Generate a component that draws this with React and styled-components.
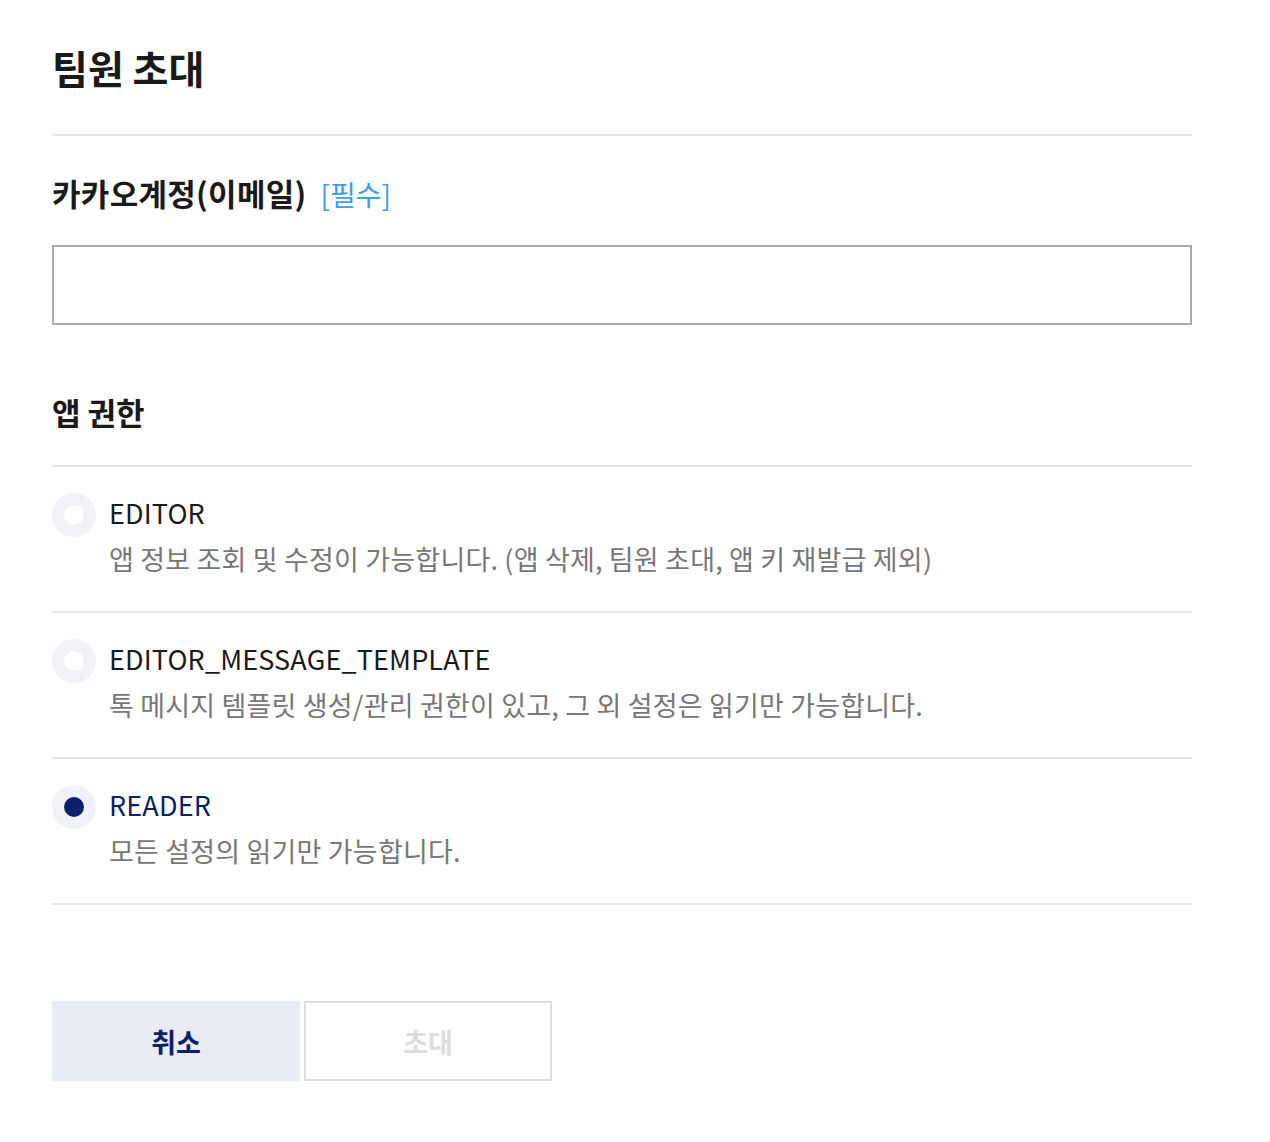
import React, { useState } from "react";
import styled, { createGlobalStyle } from "styled-components";

const Global = createGlobalStyle`
  html, body { margin: 0; padding: 0; background: #fff; }
  body { font-family: "Noto Sans CJK KR", "Noto Sans", sans-serif; color: #1a1a1a; }
  * { box-sizing: border-box; }
`;

const Page = styled.div`
  width: 1140px;
  margin-left: 52px;
  padding-top: 39px;
`;

const Title = styled.h1`
  margin: 0;
  font-size: 39px;
  font-weight: 700;
  line-height: 56px;
  color: #1a1a1a;
  padding-bottom: 39px;
  border-bottom: 2px solid #e6e6e6;
`;

const Label = styled.h2`
  margin: 0;
  padding-top: 35px;
  font-size: 31px;
  font-weight: 700;
  line-height: 44px;
  color: #1a1a1a;
  display: flex;
  align-items: baseline;
  gap: 14px;
  letter-spacing: 0.3px;
`;

const Required = styled.span`
  font-size: 28px;
  font-weight: 400;
  color: #3d9cf5;
  letter-spacing: 0;
`;

const Input = styled.input`
  display: block;
  margin-top: 29px;
  width: 100%;
  height: 80px;
  border: 2px solid #aaaaaa;
  border-radius: 0;
  padding: 0 20px;
  font-size: 26px;
  font-family: inherit;
  outline: none;
`;

const Section = styled.h2`
  margin: 0;
  padding-top: 65px;
  padding-bottom: 31px;
  font-size: 31px;
  font-weight: 700;
  line-height: 44px;
  color: #1a1a1a;
  border-bottom: 2px solid #e6e6e6;
`;

const List = styled.div`
  display: flex;
  flex-direction: column;
`;

const Option = styled.label`
  display: flex;
  align-items: flex-start;
  gap: 13px;
  height: 146px;
  padding-top: 26px;
  border-bottom: 2px solid #e6e6e6;
  cursor: pointer;
`;

const Radio = styled.span`
  flex: none;
  width: 44px;
  height: 44px;
  border-radius: 50%;
  background: #f1f2f8;
  display: flex;
  align-items: center;
  justify-content: center;
  &::after {
    content: "";
    width: 20px;
    height: 20px;
    border-radius: 50%;
    background: ${(p) => (p.$checked ? "#0b1f6b" : "#ffffff")};
  }
`;

const Texts = styled.div`
  display: flex;
  flex-direction: column;
`;

const OptName = styled.div`
  font-size: 27px;
  line-height: 40px;
  letter-spacing: 0.15px;
  color: ${(p) => (p.$checked ? "#0b1f6b" : "#1a1a1a")};
`;

const OptDesc = styled.div`
  margin-top: 6px;
  font-size: 27px;
  line-height: 40px;
  letter-spacing: 0.18px;
  color: #777777;
`;

const Buttons = styled.div`
  display: flex;
  gap: 4px;
  margin-top: 96px;
`;

const Button = styled.button`
  width: 248px;
  height: 80px;
  font-family: inherit;
  font-size: 27px;
  font-weight: 700;
  border-radius: 0;
  cursor: pointer;
  background: ${(p) => (p.$primary ? "#e9ecf5" : "#ffffff")};
  color: ${(p) => (p.$primary ? "#0b1f6b" : "#dddddd")};
  border: ${(p) => (p.$primary ? "none" : "2px solid #dddddd")};
`;

const options = [
  { key: "EDITOR", desc: "앱 정보 조회 및 수정이 가능합니다. (앱 삭제, 팀원 초대, 앱 키 재발급 제외)" },
  { key: "EDITOR_MESSAGE_TEMPLATE", desc: "톡 메시지 템플릿 생성/관리 권한이 있고, 그 외 설정은 읽기만 가능합니다." },
  { key: "READER", desc: "모든 설정의 읽기만 가능합니다." },
];

export default function App() {
  const [sel, setSel] = useState("READER");
  return (
    <>
      <Global />
      <Page>
        <Title>팀원 초대</Title>
        <Label>
          카카오계정(이메일) <Required>[필수]</Required>
        </Label>
        <Input type="text" />
        <Section>앱 권한</Section>
        <List>
          {options.map((o) => (
            <Option key={o.key} onClick={() => setSel(o.key)}>
              <Radio $checked={sel === o.key} />
              <Texts>
                <OptName $checked={sel === o.key}>{o.key}</OptName>
                <OptDesc>{o.desc}</OptDesc>
              </Texts>
            </Option>
          ))}
        </List>
        <Buttons>
          <Button $primary>취소</Button>
          <Button disabled>초대</Button>
        </Buttons>
      </Page>
    </>
  );
}
